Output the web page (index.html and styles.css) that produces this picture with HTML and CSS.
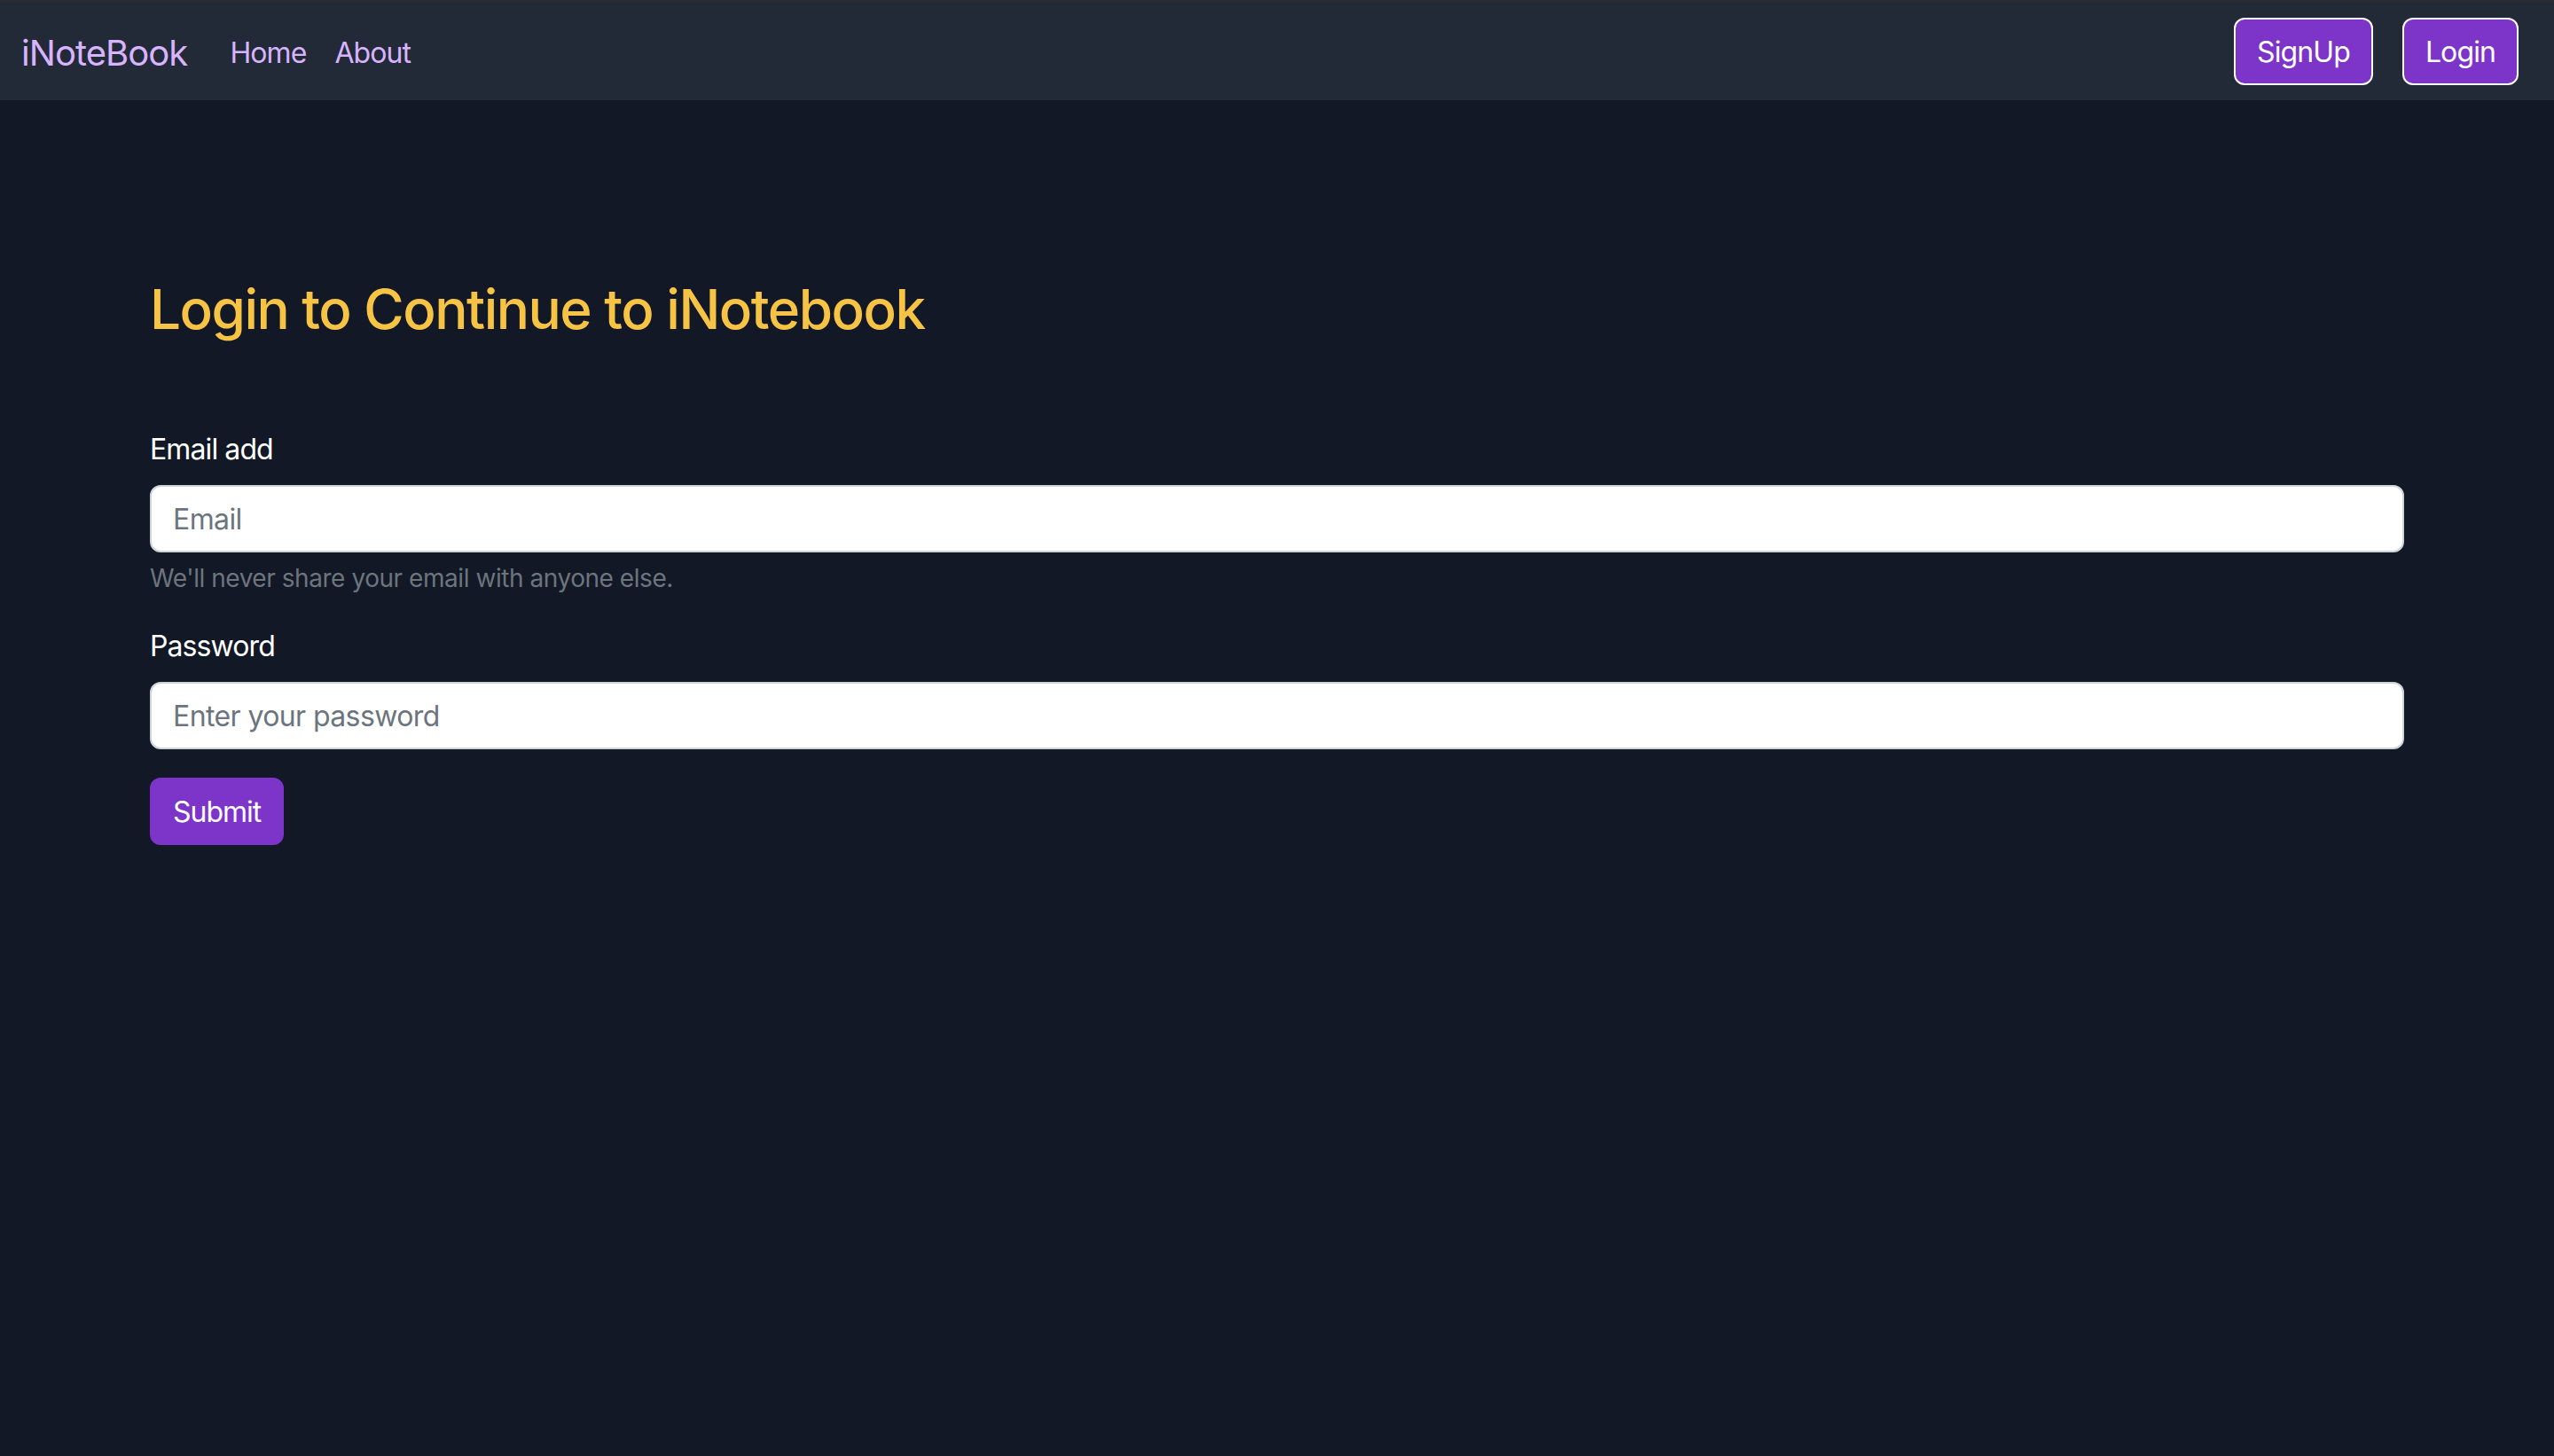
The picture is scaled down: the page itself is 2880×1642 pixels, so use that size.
FILE: index.html
```html
<!DOCTYPE html>
<html lang="en">
<head>
<meta charset="utf-8">
<title>iNoteBook</title>
<link rel="stylesheet" href="styles.css">
</head>
<body>
<div class="topstrip"></div>
<nav class="navbar">
  <div class="nav-left">
    <a class="brand" href="#">iNoteBook</a>
    <a class="nav-link" href="#">Home</a>
    <a class="nav-link" href="#">About</a>
  </div>
  <div class="nav-right">
    <a class="btn btn-outline" href="#">SignUp</a>
    <a class="btn btn-outline" href="#">Login</a>
  </div>
</nav>
<main class="main">
  <h2 class="title">Login to Continue to iNotebook</h2>
  <form class="form">
    <div class="group">
      <label class="label" for="email">Email add</label>
      <input class="input" type="email" id="email" placeholder="Email">
      <div class="help">We'll never share your email with anyone else.</div>
    </div>
    <div class="group">
      <label class="label" for="password">Password</label>
      <input class="input" type="password" id="password" placeholder="Enter your password">
    </div>
    <button class="btn btn-submit" type="submit">Submit</button>
  </form>
</main>
</body>
</html>
```
FILE: styles.css
```css
* { box-sizing: border-box; }
html, body { margin: 0; padding: 0; }
body {
  background: #121826;
  font-family: Inter, "Noto Sans", "Liberation Sans", sans-serif;
  color: #ffffff;
  min-height: 1642px;
}
.topstrip {
  height: 3px;
  background: #2c2c2c;
  border-bottom: 1px solid #0b0b0b;
}
.navbar {
  height: 111px;
  margin-top: -1px;
  background: #222937;
  display: flex;
  align-items: center;
  justify-content: space-between;
  padding: 0 24px;
}
.nav-left { display: flex; align-items: center; padding-top: 3px; }
.brand {
  font-size: 40px;
  color: #d8b4fe;
  text-decoration: none;
  margin-right: 32px;
  letter-spacing: -0.95px;
}
.nav-link {
  font-size: 32px;
  color: #d8b4fe;
  text-decoration: none;
  padding: 0 16px;
  letter-spacing: -0.9px;
}
.nav-right { display: flex; align-items: center; gap: 33px; margin-right: 16px; padding-top: 1px; }
.btn {
  display: inline-flex;
  align-items: center;
  justify-content: center;
  height: 76px;
  padding: 0 24px;
  font-family: inherit;
  font-size: 32px;
  color: #ffffff;
  background: #7d34c9;
  border-radius: 12px;
  text-decoration: none;
  letter-spacing: -0.9px;
}
.btn-outline { border: 2px solid #ffffff; }
.main { padding: 0 169px 0 169px; }
.title {
  margin: 197px 0 0 0;
  font-size: 62px;
  font-weight: 500;
  line-height: 77px;
  color: #f6c344;
  letter-spacing: -1.5px;
}
.form { margin-top: 96px; }
.group { margin-bottom: 32px; }
.label {
  display: block;
  font-size: 32px;
  line-height: 48px;
  margin-bottom: 16px;
  color: #ffffff;
  letter-spacing: -0.9px;
}
.input {
  display: block;
  width: 100%;
  height: 76px;
  padding: 0 24px;
  font-family: inherit;
  font-size: 32px;
  color: #212529;
  background: #ffffff;
  border: 2px solid #ced4da;
  border-radius: 12px;
  outline: none;
  letter-spacing: -0.6px;
}
.input::placeholder { color: #6c757d; }
.help {
  margin-top: 8px;
  font-size: 28px;
  line-height: 42px;
  color: #6c757d;
  letter-spacing: -0.45px;
}
.btn-submit {
  height: 76px;
  border: 2px solid #7d34c9;
  cursor: pointer;
  margin-top: 0;
  letter-spacing: -1px;
}
```
